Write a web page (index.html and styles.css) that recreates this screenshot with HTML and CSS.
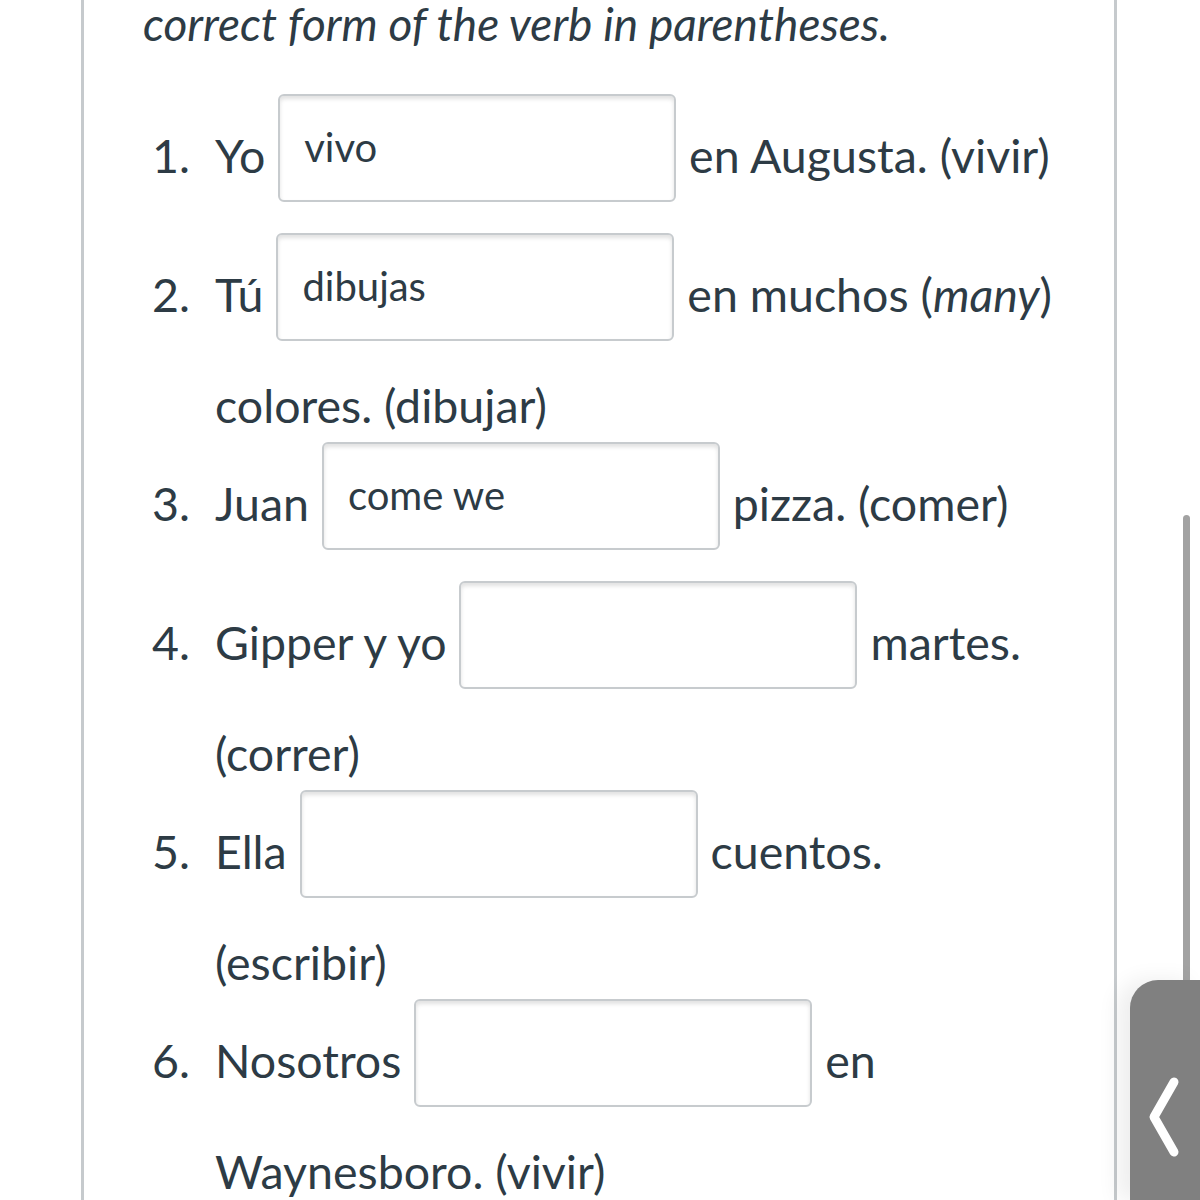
FILE: index.html
```html
<!DOCTYPE html>
<html lang="es">
<head>
<meta charset="utf-8">
<title>Quiz</title>
<link rel="stylesheet" href="styles.css">
</head>
<body>
<div class="page">
  <p class="intro">correct form of the verb in parentheses.</p>
  <ol class="items">
    <li><span class="num">1.</span>Yo <span class="blank">vivo</span> en Augusta. (vivir)</li>
    <li><span class="num">2.</span>Tú <span class="blank">dibujas</span> en muchos (<em>many</em>) colores. (dibujar)</li>
    <li><span class="num">3.</span>Juan <span class="blank">come we</span> pizza. (comer)</li>
    <li><span class="num">4.</span>Gipper y yo <span class="blank"></span> martes. (correr)</li>
    <li><span class="num">5.</span>Ella <span class="blank"></span> cuentos. (escribir)</li>
    <li><span class="num">6.</span>Nosotros <span class="blank"></span> en Waynesboro. (vivir)</li>
  </ol>
</div>
<div class="scrollbar"></div>
<div class="side-tab">
  <svg class="chevron" width="70" height="220" viewBox="0 0 70 220">
    <path d="M44 102 L24 137 L44 172" fill="none" stroke="#ffffff" stroke-width="9" stroke-linecap="round" stroke-linejoin="round"/>
  </svg>
</div>
</body>
</html>
```

FILE: styles.css
```css
html, body {
  margin: 0;
  padding: 0;
  background: #ffffff;
}

body {
  font-family: Lato, "Open Sans", sans-serif;
  color: #2d3b45;
  overflow: hidden;
  height: 1200px;
}

.page {
  margin: 14px 0 0 81px;
  width: 1036px;
  min-height: 1186px;
  box-sizing: border-box;
  border-left: 3px solid #c6cacd;
  border-right: 3px solid #c6cacd;
  padding: 0 57px 0 59px;
}

.intro {
  margin: -18px 0 0 0;
  font-size: 46px;
  line-height: 56px;
  font-style: italic;
}

.items {
  list-style: none;
  margin: 42px 0 0 0;
  padding: 0 0 0 72px;
  font-size: 46.5px;
  line-height: 70px;
}

.items li {
  margin-bottom: 2px;
}

.num {
  display: inline-block;
  width: 63px;
  margin-left: -63px;
}

.items em {
  font-style: italic;
}

.blank {
  display: inline-block;
  box-sizing: border-box;
  width: 398px;
  height: 108px;
  margin: 0 1px 29px 1px;
  padding: 28px 24px 0 24px;
  vertical-align: -58px;
  overflow: hidden;
  border: 2px solid #c7cbce;
  border-radius: 6px;
  background: #ffffff;
  box-shadow: inset 0 3px 4px rgba(0, 0, 0, 0.12);
  font-size: 40px;
  line-height: 46px;
  color: #2d3b45;
  white-space: nowrap;
}

.scrollbar {
  position: fixed;
  left: 1183px;
  top: 515px;
  width: 7px;
  height: 480px;
  border-radius: 4px;
  background: #a2a2a2;
}

.side-tab {
  position: fixed;
  left: 1130px;
  top: 980px;
  width: 70px;
  height: 220px;
  background: #808080;
  border-top-left-radius: 28px;
  box-shadow: -12px 0 22px rgba(0, 0, 0, 0.07);
}

.chevron {
  display: block;
}
```
